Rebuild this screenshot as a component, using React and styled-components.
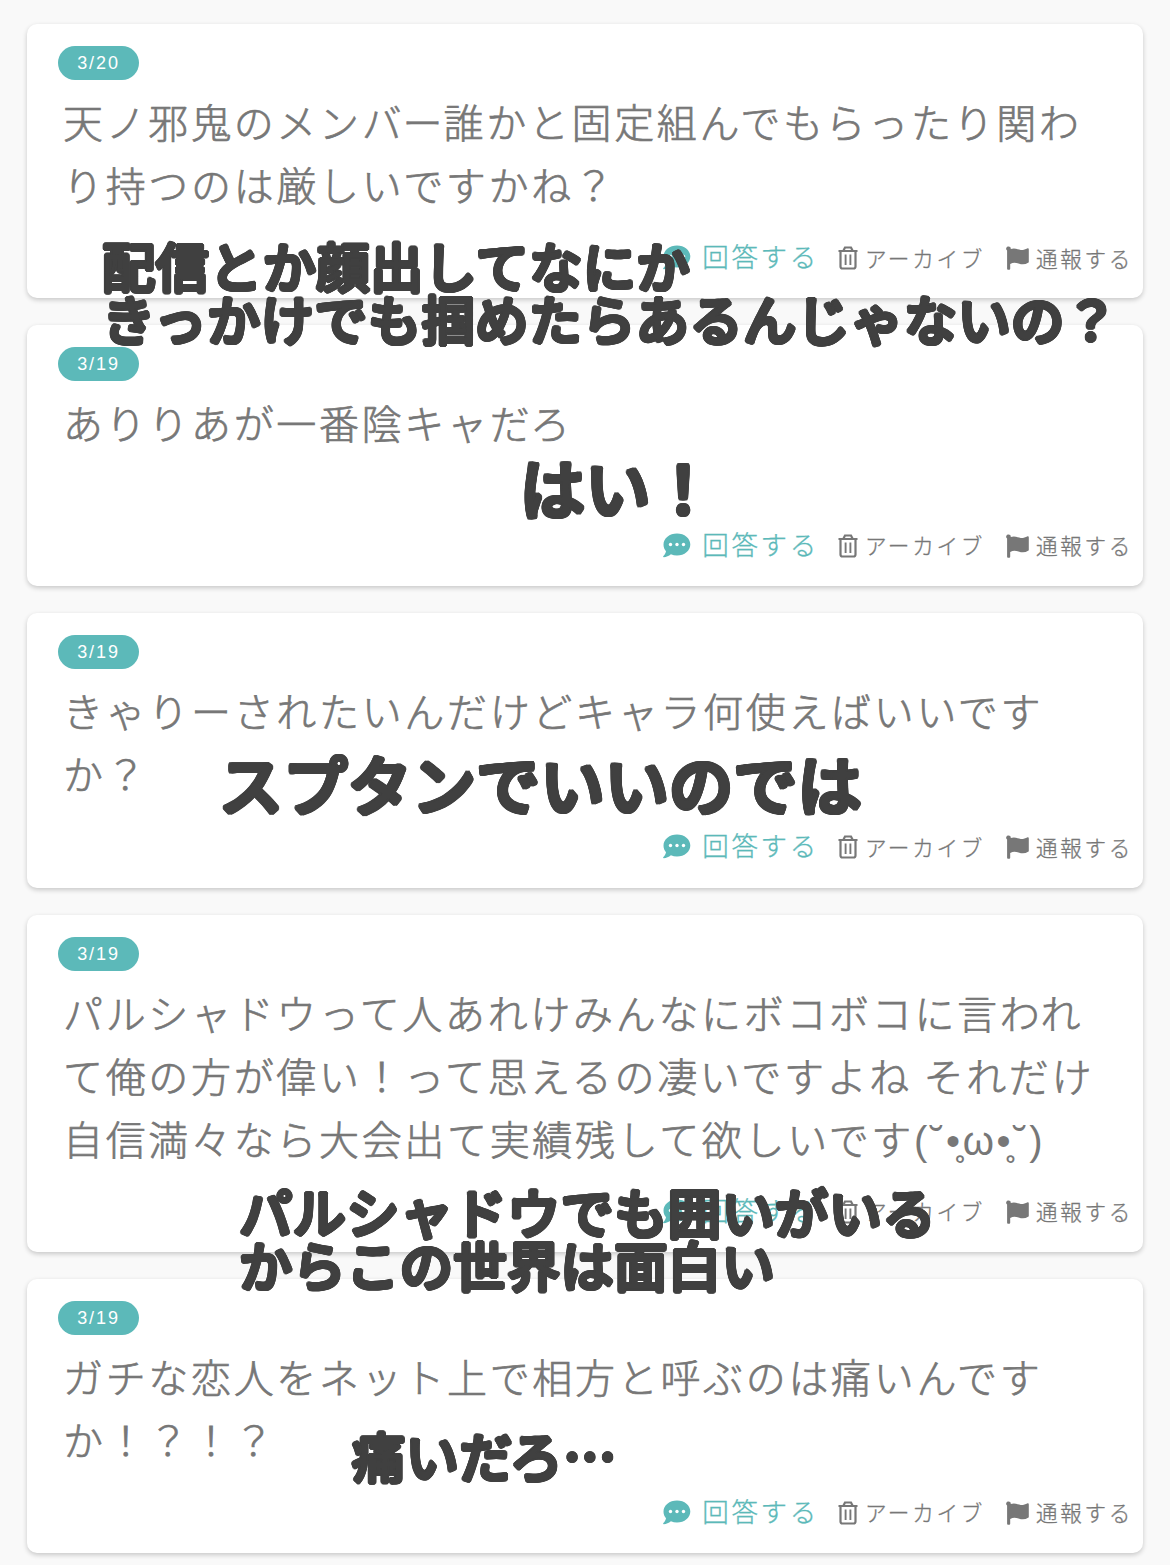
import React from 'react';
import styled, { createGlobalStyle } from 'styled-components';

const questions = [
  {
    date: '3/20',
    lines: ['天ノ邪鬼のメンバー誰かと固定組んでもらったり関わ', 'り持つのは厳しいですかね？'],
    notes: [{
      x: 75, y: 214, size: 53.3, lines: ['配信とか顔出してなにか', 'きっかけでも掴めたらあるんじゃないの？'],
    }],
  },
  {
    date: '3/19',
    lines: ['ありりあが一番陰キャだろ'],
    notes: [{
      x: 493, y: 129, size: 65, lines: ['はい！'],
    }],
  },
  {
    date: '3/19',
    lines: ['きゃりーされたいんだけどキャラ何使えばいいです', 'か？'],
    notes: [{
      x: 192, y: 137, size: 64, lines: ['スプタンでいいのでは'],
    }],
  },
  {
    date: '3/19',
    lines: [
      'パルシャドウって人あれけみんなにボコボコに言われ',
      'て俺の方が偉い！って思えるの凄いですよね それだけ',
      '自信満々なら大会出て実績残して欲しいです',
    ],
    face: true,
    notes: [{
      x: 212, y: 269, size: 53.3, lines: ['パルシャドウでも囲いがいる', 'からこの世界は面白い'],
    }],
  },
  {
    date: '3/19',
    lines: ['ガチな恋人をネット上で相方と呼ぶのは痛いんです', 'か！？！？'],
    notes: [{
      x: 325, y: 149, size: 53.3, lines: ['痛いだろ…'],
    }],
  },
];

const CommentIcon = () => (
  <svg width="28" height="25" viewBox="0 0 28 25">
    <path
      fill="#5cb9b9"
      d="M14 0.5C21.5 0.5 27.3 5.4 27.3 11.5S21.5 22.5 14 22.5c-2.2 0-4.300-.4-6.100-1.200C5.800 23 3.200 24.200.8 24.200c-.7 0-.9-.7-.4-1.200 1.400-1.500 2.300-3.200 2.600-4.800C1.400 16.400.5 14.100.5 11.500.5 5.400 6.500.5 14 .5z"
    />
    <circle cx="7.500" cy="11.500" r="1.700" fill="#fff" />
    <circle cx="14" cy="11.500" r="1.700" fill="#fff" />
    <circle cx="20.500" cy="11.500" r="1.700" fill="#fff" />
  </svg>
);

const TrashIcon = () => (
  <svg width="20" height="24" viewBox="0 0 20 24" fill="none" stroke="#777" strokeWidth="2.200">
    <path d="M0.500 5h19M5.500 4.500L7 1.500h6l1.500 3M2.500 5v15.500q0 2 2 2h11q2 0 2-2V5" />
    <path d="M7.600 8.500v10.500M12.400 8.500v10.500" strokeWidth="1.900" />
  </svg>
);

const FlagIcon = () => (
  <svg width="23" height="24" viewBox="0 0 23 24" fill="#777">
    <path d="M2.500 0.500a2.200 2.200 0 0 1 2.200 2.600C9 .9 13.500 4.500 17 3.900c1.600-.2 3-.8 4.200-1.400.8-.4 1.600.1 1.600 1v12.200c0 .5-.2.900-.7 1.100-1.800 1.100-3.700 1.600-5.600 1.500-3.800-.2-7.300-2.900-12.300-.4v4.900q0 .9-.9.900H2q-.9 0-.9-.9V4.500A2.200 2.200 0 0 1 2.500.5z" />
  </svg>
);

// the long vowel mark sits tight after バ
const kern = (line) => line.split(/(バー)/).map((part) => (
  part === 'バー' ? <Tight key={part}>{part}</Tight> : part
));

const Question = ({
  date, lines, face, notes,
}) => (
  <Card>
    <DateBadge>{date}</DateBadge>
    <Body>
      {lines.map((line, i) => (
        <Line key={line}>
          {kern(line)}
          {face && i === lines.length - 1 && <Face>(˘•̥ω•̥˘)</Face>}
        </Line>
      ))}
    </Body>
    <Actions>
      <Answer>
        <CommentIcon />
        <span>回答する</span>
      </Answer>
      <Action>
        <TrashIcon />
        <span>アーカイブ</span>
      </Action>
      <Action>
        <FlagIcon />
        <span>通報する</span>
      </Action>
    </Actions>
    {notes.map((note) => (
      <Note key={note.lines[0]} $x={note.x} $y={note.y} $size={note.size}>
        {note.lines.map((line) => <div key={line}>{line}</div>)}
      </Note>
    ))}
  </Card>
);

const App = () => (
  <>
    <GlobalStyle />
    <Page>
      {questions.map((q) => <Question key={q.lines[0]} {...q} />)}
    </Page>
  </>
);

export default App;

const GlobalStyle = createGlobalStyle`
  body {
    margin: 0;
    background: #f9f9f9;
    font-family: "Liberation Sans", "Noto Sans CJK JP", sans-serif;
    color: #777;
  }
`;

const Page = styled.div`
  box-sizing: border-box;
  width: 1170px;
  height: 1565px;
  padding: 24px 27px 0;
  display: flex;
  flex-direction: column;
  gap: 27px;
  overflow: hidden;
`;

const Card = styled.section`
  position: relative;
  flex: none;
  box-sizing: border-box;
  padding: 22px 10px 22.400px 31px;
  background: #fff;
  border-radius: 10px;
  box-shadow: 0 2px 5px rgba(0, 0, 0, 0.2);
`;

const DateBadge = styled.div`
  width: 81px;
  height: 34px;
  border-radius: 17px;
  background: #5cb9b9;
  color: #fff;
  font-size: 18px;
  line-height: 34px;
  letter-spacing: 1.900px;
  text-align: center;
`;

const Body = styled.div`
  box-sizing: border-box;
  min-height: 125.400px;
  padding: 10px 0 3px 5px;
`;

const Line = styled.div`
  height: 63px;
  font-family: "Noto Sans CJK JP", sans-serif;
  font-weight: 300;
  font-size: 40px;
  line-height: 63px;
  letter-spacing: 2.670px;
  white-space: nowrap;
  -webkit-text-stroke: 0.700px #777;
`;

const Tight = styled.span`
  letter-spacing: 0.900px;
`;

const Face = styled.span`
  font-family: "Liberation Sans", "Open Sans", sans-serif;
  font-weight: 400;
  -webkit-text-stroke: 0;
`;

const Actions = styled.div`
  display: flex;
  justify-content: flex-end;
  align-items: center;
  height: 36px;
  margin-top: 21px;
  gap: 20px;
  font-family: "Noto Sans CJK JP", sans-serif;
  font-weight: 300;
  letter-spacing: 2.670px;
  white-space: nowrap;
`;

const Action = styled.div`
  display: flex;
  align-items: center;
  gap: 7px;
  height: 36px;
  font-size: 21.600px;
  line-height: 36px;
  -webkit-text-stroke: 0.300px currentColor;

  span {
    margin-bottom: 1px;
  }

  &:nth-child(2) {
    margin-right: 1px;
  }
`;

const Answer = styled(Action)`
  gap: 11px;
  margin-right: -1px;
  color: #5cb9b9;
  font-size: 26.500px;

  svg {
    margin-bottom: 1px;
  }

  span {
    margin-bottom: 4px;
  }
`;

const ring = (r) => Array.from({ length: 16 }, (_, i) => {
  const a = (i * Math.PI) / 8;
  return `${(r * Math.cos(a)).toFixed(2)}px ${(r * Math.sin(a)).toFixed(2)}px 0 #404040`;
}).join(', ');

const Note = styled.div`
  position: absolute;
  z-index: 1;
  left: ${(props) => props.$x}px;
  top: ${(props) => props.$y}px;
  color: #404040;
  font-family: "Noto Sans CJK JP", sans-serif;
  font-weight: 500;
  font-size: ${(props) => props.$size}px;
  line-height: 1;
  letter-spacing: 0.300px;
  white-space: nowrap;
  text-shadow: ${(props) => ring(props.$size * 0.036)};
`;
